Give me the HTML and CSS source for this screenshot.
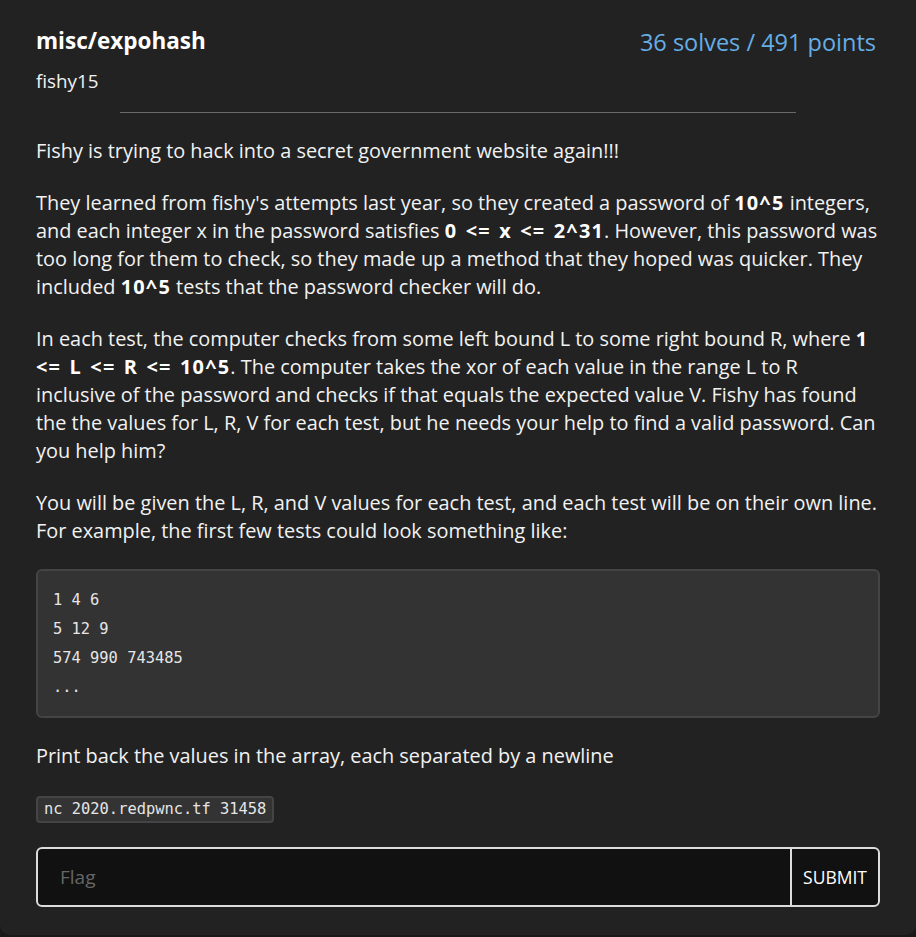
FILE: index.html
```html
<!DOCTYPE html>
<html lang="en">
<head>
<meta charset="utf-8">
<title>misc/expohash</title>
<link rel="stylesheet" href="styles.css">
</head>
<body>
<div class="card">
  <div class="header">
    <div class="titles">
      <h1 class="title">misc/expohash</h1>
      <div class="author">fishy15</div>
    </div>
    <div class="points">36 solves / 491 points</div>
  </div>
  <hr class="divider">
  <div class="desc">
    <p>Fishy is trying to hack into a secret government website again!!!</p>
    <p>They learned from fishy's attempts last year, so they created a password of <strong>10^5</strong> integers, and each integer x in the password satisfies <strong>0 &lt;= x &lt;= 2^31</strong>. However, this password was too long for them to check, so they made up a method that they hoped was quicker. They included <strong>10^5</strong> tests that the password checker will do.</p>
    <p>In each test, the computer checks from some left bound L to some right bound R, where <strong>1 &lt;= L &lt;= R &lt;= 10^5</strong>. The computer takes the xor of each value in the range L to R inclusive of the password and checks if that equals the expected value V. Fishy has found the the values for L, R, V for each test, but he needs your help to find a valid password. Can you help him?</p>
    <p>You will be given the L, R, and V values for each test, and each test will be on their own line. For example, the first few tests could look something like:</p>
    <pre class="codeblock">1 4 6
5 12 9
574 990 743485
...</pre>
    <p>Print back the values in the array, each separated by a newline</p>
    <p><code class="inline">nc 2020.redpwnc.tf 31458</code></p>
  </div>
  <form class="flagform">
    <input class="flaginput" type="text" placeholder="Flag">
    <button class="submit" type="button">SUBMIT</button>
  </form>
</div>
</body>
</html>
```

FILE: styles.css
```css
html, body {
  margin: 0;
  padding: 0;
  background: #191919;
}
body {
  font-family: "Open Sans", "Noto Sans", sans-serif;
  color: #f2f2f2;
}
.card {
  background: #222222;
  border-radius: 0 0 10px 10px;
  padding: 24px 36px 28px 36px;
  box-sizing: border-box;
  min-height: 935px;
}
.header {
  display: flex;
  justify-content: space-between;
  align-items: flex-start;
}
.title {
  margin: 0;
  font-size: 22.5px;
  font-weight: 700;
  line-height: 34px;
  color: #ffffff;
}
.author {
  font-size: 18.8px;
  line-height: 28px;
  margin-top: 9px;
}
.points {
  font-size: 23.5px;
  line-height: 36px;
  color: #66aee6;
  margin-right: 4px;
}
.divider {
  width: 80%;
  margin: 17px auto 0 auto;
  border: none;
  border-top: 1px solid #6a6a6a;
  height: 0;
}
.desc {
  margin-top: 24px;
  font-size: 19.9px;
  line-height: 28px;
}
.desc p {
  margin: 0 0 24px 0;
}
.desc strong {
  font-weight: 700;
  color: #ffffff;
  letter-spacing: 1.2px;
  word-spacing: 2px;
}
.codeblock {
  margin: 0 0 24px 0;
  background: #333333;
  border: 2px solid #444444;
  border-radius: 6px;
  padding: 15px 15px 14px 15px;
  font-family: "DejaVu Sans Mono", "Liberation Mono", monospace;
  font-size: 15.4px;
  line-height: 29px;
  color: #e6e6e6;
}
.inline {
  display: inline-block;
  vertical-align: middle;
  background: #333333;
  border: 2px solid #444444;
  border-radius: 4px;
  padding: 0 6px;
  font-family: "DejaVu Sans Mono", "Liberation Mono", monospace;
  font-size: 15.4px;
  line-height: 23px;
  color: #e6e6e6;
}
.flagform {
  display: flex;
  border: 2px solid #dcdcdc;
  border-radius: 6px;
  background: #111111;
  height: 60px;
  box-sizing: border-box;
  margin-top: 3px;
}
.flaginput {
  flex: 1;
  background: transparent;
  border: none;
  outline: none;
  padding: 0 22px;
  font-family: "Open Sans", "Noto Sans", sans-serif;
  font-size: 19px;
  color: #f2f2f2;
}
.flaginput::placeholder {
  color: #666666;
}
.submit {
  background: transparent;
  border: none;
  border-left: 2px solid #dcdcdc;
  color: #ffffff;
  font-family: "Open Sans", "Noto Sans", sans-serif;
  font-size: 17.5px;
  padding: 0 11px;
}
```
